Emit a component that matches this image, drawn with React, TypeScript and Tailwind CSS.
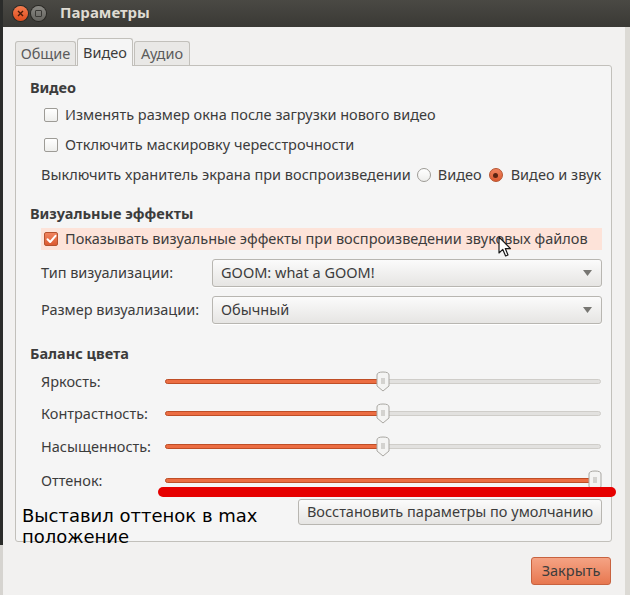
import React from "react";

const font = { fontFamily: '"Noto Sans", "DejaVu Sans", sans-serif' };

function Checkbox({ checked = false }: { checked?: boolean }) {
  return (
    <span
      className={`flex h-[14px] w-[14px] shrink-0 items-center justify-center rounded-[2px] border ${
        checked
          ? "border-[#b5522e] bg-gradient-to-b from-[#f0845f] to-[#dc5a30]"
          : "border-[#9d9b96] bg-gradient-to-b from-[#ffffff] to-[#eeeeec]"
      }`}
    >
      {checked && (
        <svg width="11" height="10" viewBox="0 0 11 10">
          <path d="M1.5 5.2 L4.2 8 L9.5 1.8" fill="none" stroke="#ffffff" strokeWidth="2" strokeLinecap="round" strokeLinejoin="round" />
        </svg>
      )}
    </span>
  );
}

function Radio({ checked = false }: { checked?: boolean }) {
  return (
    <span
      className={`flex h-[14px] w-[14px] shrink-0 items-center justify-center rounded-full border ${
        checked
          ? "border-[#b5522e] bg-gradient-to-b from-[#f0845f] to-[#dc5a30]"
          : "border-[#9d9b96] bg-gradient-to-b from-[#ffffff] to-[#eeeeec]"
      }`}
    >
      {checked && <span className="h-[5px] w-[5px] rounded-full bg-[#5a2412]" />}
    </span>
  );
}

function Combo({ value }: { value: string }) {
  return (
    <div className="flex h-[28px] w-[390px] items-center justify-between rounded-[3px] border border-[#b8b6b1] bg-gradient-to-b from-[#fbfbfb] to-[#e6e5e3] pl-[8px] pr-[9px] shadow-[0_1px_0_#ffffff]">
      <span>{value}</span>
      <svg width="9" height="6" viewBox="0 0 9 6">
        <path d="M0 0 H9 L4.5 6 Z" fill="#777672" />
      </svg>
    </div>
  );
}

function Slider({ label, pos, pill = false }: { label: string; pos: number; pill?: boolean }) {
  return (
    <div className="flex h-[24px] items-center pl-[11px]">
      <span className="w-[124px] shrink-0">{label}</span>
      <div className="relative h-[24px] w-[436px]">
        <div className="absolute left-0 right-0 top-[9px] h-[5px] rounded-full border border-[#cfcdc9] bg-[#e2e1df]" />
        <div
          className="absolute left-0 top-[9px] h-[5px] rounded-full border border-[#bf4e26] bg-[#ec6d42]"
          style={{ width: pos + 4 }}
        />
        <svg
          className="absolute top-[1px]"
          style={{ left: pos - 8 }}
          width="18"
          height="22"
          viewBox="0 0 18 22"
        >
          {pill ? (
            <path d="M3 4 Q3 1 9 1 Q15 1 15 4 V16 Q15 19 9 19 Q3 19 3 16 Z" fill="#f4f4f3" stroke="#a9a7a2" />
          ) : (
            <path d="M3 4 Q3 1 9 1 Q15 1 15 4 V15 L9 20 L3 15 Z" fill="#f4f4f3" stroke="#a9a7a2" />
          )}
          <path d="M7 8 H11 M7 10 H11 M7 12 H11" stroke="#b3b1ac" strokeWidth="1" />
        </svg>
      </div>
    </div>
  );
}

export default function App() {
  return (
    <div className="relative flex h-[595px] w-[630px] overflow-hidden bg-[#f2f1f0] text-[14.5px] text-[#3c3c3c]" style={font}>
      {/* desktop strips */}
      <div className="flex w-[3px] flex-col">
        <div className="h-[545px] bg-[#2b2c2a]" />
        <div className="flex-1 bg-[#d6d4d0]" />
      </div>
      <div className="flex flex-1 flex-col">
        {/* title bar */}
        <div className="flex h-[27px] items-center bg-gradient-to-b from-[#4a4944] to-[#3a3935] pl-[10px]">
          <div className="flex h-[15px] w-[15px] items-center justify-center rounded-full bg-gradient-to-b from-[#f47c4e] to-[#df4b1a] shadow-[0_0_0_1px_#2a2925]">
            <svg width="7" height="7" viewBox="0 0 7 7">
              <path d="M1 1 L6 6 M6 1 L1 6" stroke="#4a1a08" strokeWidth="1.4" />
            </svg>
          </div>
          <div className="ml-[3px] flex h-[15px] w-[15px] items-center justify-center rounded-full bg-gradient-to-b from-[#8a8984] to-[#65645f] shadow-[0_0_0_1px_#2a2925]">
            <span className="h-[7px] w-[7px] rounded-[1px] border border-[#3a3935]" />
          </div>
          <span className="-mt-[2px] ml-[14px] text-[15px] font-bold text-[#dfdbd2]">Параметры</span>
        </div>

        {/* body */}
        <div className="flex flex-1">
          <div className="flex flex-1 flex-col pl-[12px] pr-[13px]">
            {/* tabs */}
            <div className="mt-[11px] flex h-[27px] items-end">
              <div className="flex h-[24px] w-[61px] items-center justify-center rounded-t-[3px] border border-b-0 border-[#c2c0bb] bg-[#e9e8e6] text-[#5b5b5b]">
                Общие
              </div>
              <div className="relative z-10 -mb-px ml-[1px] flex h-[28px] w-[56px] items-center justify-center rounded-t-[3px] border border-b-0 border-[#c2c0bb] bg-[#f5f5f5]">
                Видео
              </div>
              <div className="ml-[1px] flex h-[24px] w-[56px] items-center justify-center rounded-t-[3px] border border-b-0 border-[#c2c0bb] bg-[#e9e8e6] text-[#5b5b5b]">
                Аудио
              </div>
            </div>

            {/* panel */}
            <div className="flex h-[477px] flex-col rounded-b-[3px] rounded-tr-[3px] border border-[#c2c0bb] bg-[#f5f5f5] pl-[14px] pr-[9px]">
              <div className="mt-[12px] flex h-[20px] items-center font-bold">Видео</div>
              <div className="mt-[7px] flex h-[20px] items-center gap-[7px] pl-[14px]">
                <Checkbox />
                <span>Изменять размер окна после загрузки нового видео</span>
              </div>
              <div className="mt-[10px] flex h-[20px] items-center gap-[7px] pl-[14px]">
                <Checkbox />
                <span>Отключить маскировку чересстрочности</span>
              </div>
              <div className="mt-[10px] flex h-[20px] items-center whitespace-nowrap pl-[11px]">
                <span>Выключить хранитель экрана при воспроизведении</span>
                <span className="ml-[6px]">
                  <Radio />
                </span>
                <span className="ml-[7px]">Видео</span>
                <span className="ml-[7px]">
                  <Radio checked />
                </span>
                <span className="ml-[8px]">Видео и звук</span>
              </div>

              <div className="mt-[19px] flex h-[20px] items-center font-bold">Визуальные эффекты</div>
              <div className="ml-[11px] mt-[4px] flex h-[22px] items-center gap-[7px] bg-[#fde3d9] pl-[3px]">
                <Checkbox checked />
                <span>Показывать визуальные эффекты при воспроизведении звуковых файлов</span>
              </div>
              <div className="mt-[9px] flex items-center justify-between pl-[11px]">
                <span>Тип визуализации:</span>
                <Combo value="GOOM: what a GOOM!" />
              </div>
              <div className="mt-[9px] flex items-center justify-between pl-[11px]">
                <span>Размер визуализации:</span>
                <Combo value="Обычный" />
              </div>

              <div className="mt-[20px] flex h-[20px] items-center font-bold">Баланс цвета</div>
              <div className="mt-[6px]">
                <Slider label="Яркость:" pos={217} />
              </div>
              <div className="mt-[8px]">
                <Slider label="Контрастность:" pos={217} />
              </div>
              <div className="mt-[9px]">
                <Slider label="Насыщенность:" pos={217} />
              </div>
              <div className="mt-[10px]">
                <Slider label="Оттенок:" pos={429} pill />
              </div>

              <div className="mt-[6px] flex justify-end">
                <div className="flex h-[26px] items-center rounded-[3px] border border-[#b8b6b1] bg-gradient-to-b from-[#fbfbfb] to-[#e6e5e3] px-[8px]">
                  Восстановить параметры по умолчанию
                </div>
              </div>
            </div>

            <div className="mt-[15px] flex justify-end pr-[1px]">
              <div className="flex h-[28px] w-[80px] items-center justify-center rounded-[3px] border border-[#c8623f] bg-gradient-to-b from-[#f5a384] to-[#e7774f]">
                Закрыть
              </div>
            </div>
          </div>
          <div className="w-[5px] bg-[#dcdad5]" />
        </div>
      </div>

      {/* mouse pointer */}
      <svg className="absolute left-[498px] top-[236px]" width="14" height="22" viewBox="0 0 14 22">
        <path d="M1 1 V17 L4.8 13.4 L7.6 20 L10 19 L7.3 12.6 L12.5 12.6 Z" fill="#ffffff" stroke="#1a1a1a" strokeWidth="1.2" strokeLinejoin="round" />
      </svg>

      {/* annotation drawn over the screenshot */}
      <div className="absolute left-[158px] top-[487px] h-[10px] w-[458px] rounded-full bg-[#e60000]" />
      <div
        className="absolute left-[22px] top-[505px] w-[270px] text-[18px] leading-[21px] text-black"
        style={{ fontFamily: '"DejaVu Sans", sans-serif' }}
      >
        Выставил оттенок в max положение
      </div>
    </div>
  );
}
